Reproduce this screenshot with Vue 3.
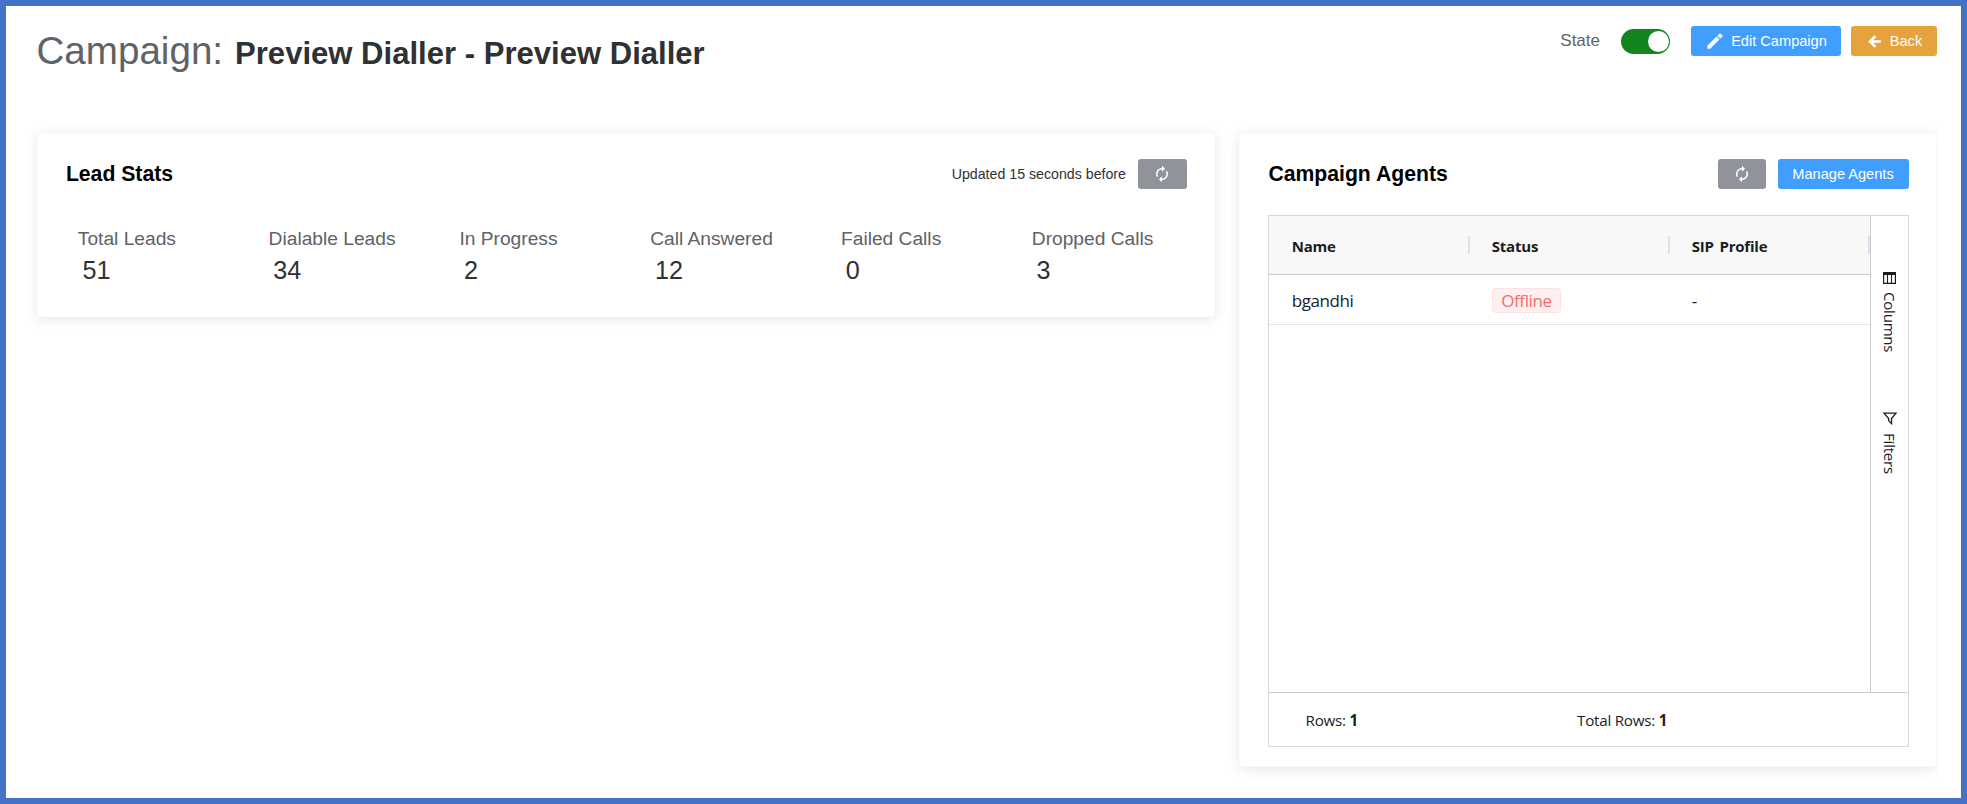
<script setup>
const stats = [
  { label: 'Total Leads', value: 51 },
  { label: 'Dialable Leads', value: 34 },
  { label: 'In Progress', value: 2 },
  { label: 'Call Answered', value: 12 },
  { label: 'Failed Calls', value: 0 },
  { label: 'Dropped Calls', value: 3 },
]
const columns = ['Name', 'Status', 'SIP Profile']
const agents = [{ name: 'bgandhi', status: 'Offline', sip: '-' }]
</script>

<template>
  <div class="page">
    <header class="header">
      <h1 class="title"><span class="prefix">Campaign:</span><b>Preview Dialler - Preview Dialler</b></h1>
      <div class="actions">
        <span class="state">State</span>
        <span class="switch"><i></i></span>
        <button class="btn edit">
          <svg width="16" height="16" viewBox="0 0 15 15" fill="#fff"><path d="M0.3 14.7v-2.7L9 3.3l2.7 2.7-8.7 8.7zM9.8 2.5l1.9-1.9a.9.9 0 0 1 1.1 0l1.6 1.6a.9.9 0 0 1 0 1.1l-1.9 1.9z" /></svg>
          <span>Edit Campaign</span>
        </button>
        <button class="btn back">
          <svg width="13" height="13" viewBox="0 0 14 14" fill="none" stroke="#fff" stroke-width="2.9"><path d="M13.8 7H2.5M8 1.2 2.2 7 8 12.8" /></svg>
          <span>Back</span>
        </button>
      </div>
    </header>

    <main class="cards">
      <section class="card leads">
        <div class="card-head">
          <h2>Lead Stats</h2>
          <span class="updated">Updated 15 seconds before</span>
          <button class="btn refresh">
            <svg width="18" height="18" viewBox="0 0 24 24" fill="#fff"><path d="M12 6v3l4-4-4-4v3c-4.42 0-8 3.58-8 8 0 1.57.46 3.03 1.24 4.26L6.7 14.8A5.87 5.87 0 0 1 6 12c0-3.31 2.69-6 6-6zm6.76 1.74L17.3 9.2c.44.84.7 1.79.7 2.8 0 3.31-2.69 6-6 6v-3l-4 4 4 4v-3c4.42 0 8-3.58 8-8 0-1.57-.46-3.03-1.24-4.26z" /></svg>
          </button>
        </div>
        <div class="stats">
          <div v-for="s in stats" :key="s.label" class="stat">
            <div class="label">{{ s.label }}</div>
            <div class="value">{{ s.value }}</div>
          </div>
        </div>
      </section>

      <section class="card agents">
        <div class="card-head">
          <h2>Campaign Agents</h2>
          <button class="btn refresh">
            <svg width="18" height="18" viewBox="0 0 24 24" fill="#fff"><path d="M12 6v3l4-4-4-4v3c-4.42 0-8 3.58-8 8 0 1.57.46 3.03 1.24 4.26L6.7 14.8A5.87 5.87 0 0 1 6 12c0-3.31 2.69-6 6-6zm6.76 1.74L17.3 9.2c.44.84.7 1.79.7 2.8 0 3.31-2.69 6-6 6v-3l-4 4 4 4v-3c4.42 0 8-3.58 8-8 0-1.57-.46-3.03-1.24-4.26z" /></svg>
          </button>
          <button class="btn manage">Manage Agents</button>
        </div>
        <div class="grid">
          <div class="grid-main">
            <div class="table">
              <div class="row head">
                <div v-for="c in columns" :key="c" class="cell"><span>{{ c }}</span><i class="sep"></i></div>
              </div>
              <div v-for="a in agents" :key="a.name" class="row body">
                <div class="cell"><span>{{ a.name }}</span></div>
                <div class="cell"><span class="tag">{{ a.status }}</span></div>
                <div class="cell"><span>{{ a.sip }}</span></div>
              </div>
            </div>
            <aside class="side">
              <div class="tab columns-tab">
                <svg width="13" height="12" viewBox="0 0 13 12"><path d="M.6.6h11.8v10.8H.6z" fill="none" stroke="#181d1f" stroke-width="1.2" /><path d="M0 0h13v3H0z" fill="#181d1f" /><path d="M4.5 2v9.5M8.5 2v9.5" stroke="#181d1f" stroke-width="1.1" /></svg>
                <span>Columns</span>
              </div>
              <div class="tab filters-tab">
                <svg width="14" height="13" viewBox="0 0 14 13"><path d="M1 1.2h12L8.5 6.6v5L5.6 8.6v-2z" fill="none" stroke="#181d1f" stroke-width="1.3" /></svg>
                <span>Filters</span>
              </div>
            </aside>
          </div>
          <div class="footer">
            <div class="rows">Rows: <b>1</b></div>
            <div class="total">Total Rows: <b>1</b></div>
          </div>
        </div>
      </section>
    </main>
  </div>
</template>

<style>
body {
  margin: 0;
  background: #fff;
}
</style>

<style scoped>
* {
  box-sizing: border-box;
}
.page {
  width: 1967px;
  height: 804px;
  border: 6px solid #4472c6;
  padding: 20px 24px 0 30.5px;
  background: #fff;
  font-family: "Liberation Sans", Arial, sans-serif;
  overflow: hidden;
}
.header {
  height: 107.4px;
  display: flex;
  justify-content: space-between;
  align-items: flex-start;
}
.title {
  margin: 5px 0 0;
  line-height: 40px;
  font-size: 31.07px;
  color: #303133;
  white-space: nowrap;
}
.prefix {
  font-size: 38.6px;
  font-weight: 400;
  color: #606266;
  margin-right: 12px;
}
.actions {
  display: flex;
  align-items: center;
  height: 30px;
}
.state {
  font-size: 17px;
  line-height: 20px;
  color: #606266;
  margin: 0 21px 0 0;
}
.switch {
  width: 49px;
  height: 25px;
  border-radius: 13px;
  background: #13841e;
  display: flex;
  align-items: center;
  justify-content: flex-end;
  padding-right: 1.5px;
  margin-right: 21px;
}
.switch i {
  width: 21px;
  height: 21px;
  border-radius: 50%;
  background: #fff;
}
.btn {
  height: 30px;
  border: 0;
  border-radius: 3px;
  padding: 0;
  font: 14.6px "Liberation Sans", Arial, sans-serif;
  color: #fff;
  display: flex;
  align-items: center;
  justify-content: center;
  flex: none;
}
.edit {
  width: 150px;
  background: #409eff;
  margin-right: 10px;
  gap: 8px;
  padding-left: 2px;
}
.back {
  width: 86px;
  background: #e6a23c;
  gap: 9px;
  padding-left: 2px;
}
.cards {
  display: flex;
  align-items: flex-start;
  justify-content: space-between;
}
.card {
  background: #fff;
  border-radius: 4px;
  box-shadow: 0 2px 13px rgba(0, 0, 0, 0.1);
  border: 1px solid #fbfbfc;
}
.leads {
  width: 1178.5px;
  height: 183.5px;
}
.agents {
  width: 698px;
  height: 633.5px;
  clip-path: inset(-30px -1px -30px -30px);
}
.card-head {
  display: flex;
  align-items: center;
  height: 30px;
  margin: 25px 27.5px 0 28.4px;
}
h2 {
  margin: 0 auto 0 0;
  font-size: 21.2px;
  line-height: 30px;
  color: #000;
}
.updated {
  font-size: 14.2px;
  color: #303133;
  margin-right: 12px;
}
.refresh {
  width: 48.5px;
  background: #909399;
}
.manage {
  width: 131px;
  background: #409eff;
  margin-left: 11.5px;
}
.stats {
  display: grid;
  grid-template-columns: repeat(6, 190.8px);
  margin: 36px 0 0 40.3px;
}
.label {
  font-size: 19.2px;
  line-height: 28px;
  color: #606266;
}
.value {
  font-size: 25.2px;
  line-height: 32px;
  color: #303133;
  padding-left: 4.7px;
  margin-top: 1px;
}
.grid {
  margin: 26px 27.5px 0 28.3px;
  height: 532px;
  border: 1.4px solid #d3d6dc;
  font-family: "Open Sans", "Noto Sans", sans-serif;
  color: #181d1f;
  display: flex;
  flex-direction: column;
}
.grid-main {
  flex: 1;
  display: flex;
}
.table {
  flex: 1;
  overflow: hidden;
}
.row {
  display: flex;
}
.cell {
  width: 200px;
  flex: none;
  display: flex;
  align-items: center;
  padding-left: 22.4px;
  white-space: nowrap;
}
.head {
  height: 59px;
  background: #f8f8f8;
  border-bottom: 1px solid #c9ccd3;
  font-size: 15px;
  font-weight: 700;
  letter-spacing: -0.2px;
  word-spacing: 2px;
}
.head span {
  padding-top: 2px;
}
.sep {
  width: 2px;
  height: 18px;
  background: #dde2eb;
  margin: 0 -0.6px 0 auto;
}
.body {
  height: 50px;
  border-bottom: 1px solid #e2e5ea;
  font-size: 17px;
  letter-spacing: -0.4px;
}
.body span {
  margin-top: 2px;
}
.tag {
  height: 25px;
  width: 69.5px;
  line-height: 23px;
  text-align: center;
  background: #fef0f0;
  border: 1px solid #fde2e2;
  border-radius: 4px;
  color: #f56c6c;
}
.side {
  width: 38px;
  border-left: 1px solid #c9ccd3;
  padding-top: 56px;
  font-size: 15px;
}
.tab {
  display: flex;
  flex-direction: column;
  align-items: center;
  padding-left: 1px;
}
.tab span {
  writing-mode: vertical-rl;
  line-height: 20px;
  margin-top: 8px;
  letter-spacing: -0.2px;
}
.columns-tab {
  height: 140px;
}
.footer {
  height: 54px;
  border-top: 1px solid #c9ccd3;
  display: flex;
  align-items: center;
  font-size: 15.2px;
  letter-spacing: -0.25px;
  padding: 1px 0 0 36.3px;
}
.rows {
  width: 271.5px;
}
</style>
